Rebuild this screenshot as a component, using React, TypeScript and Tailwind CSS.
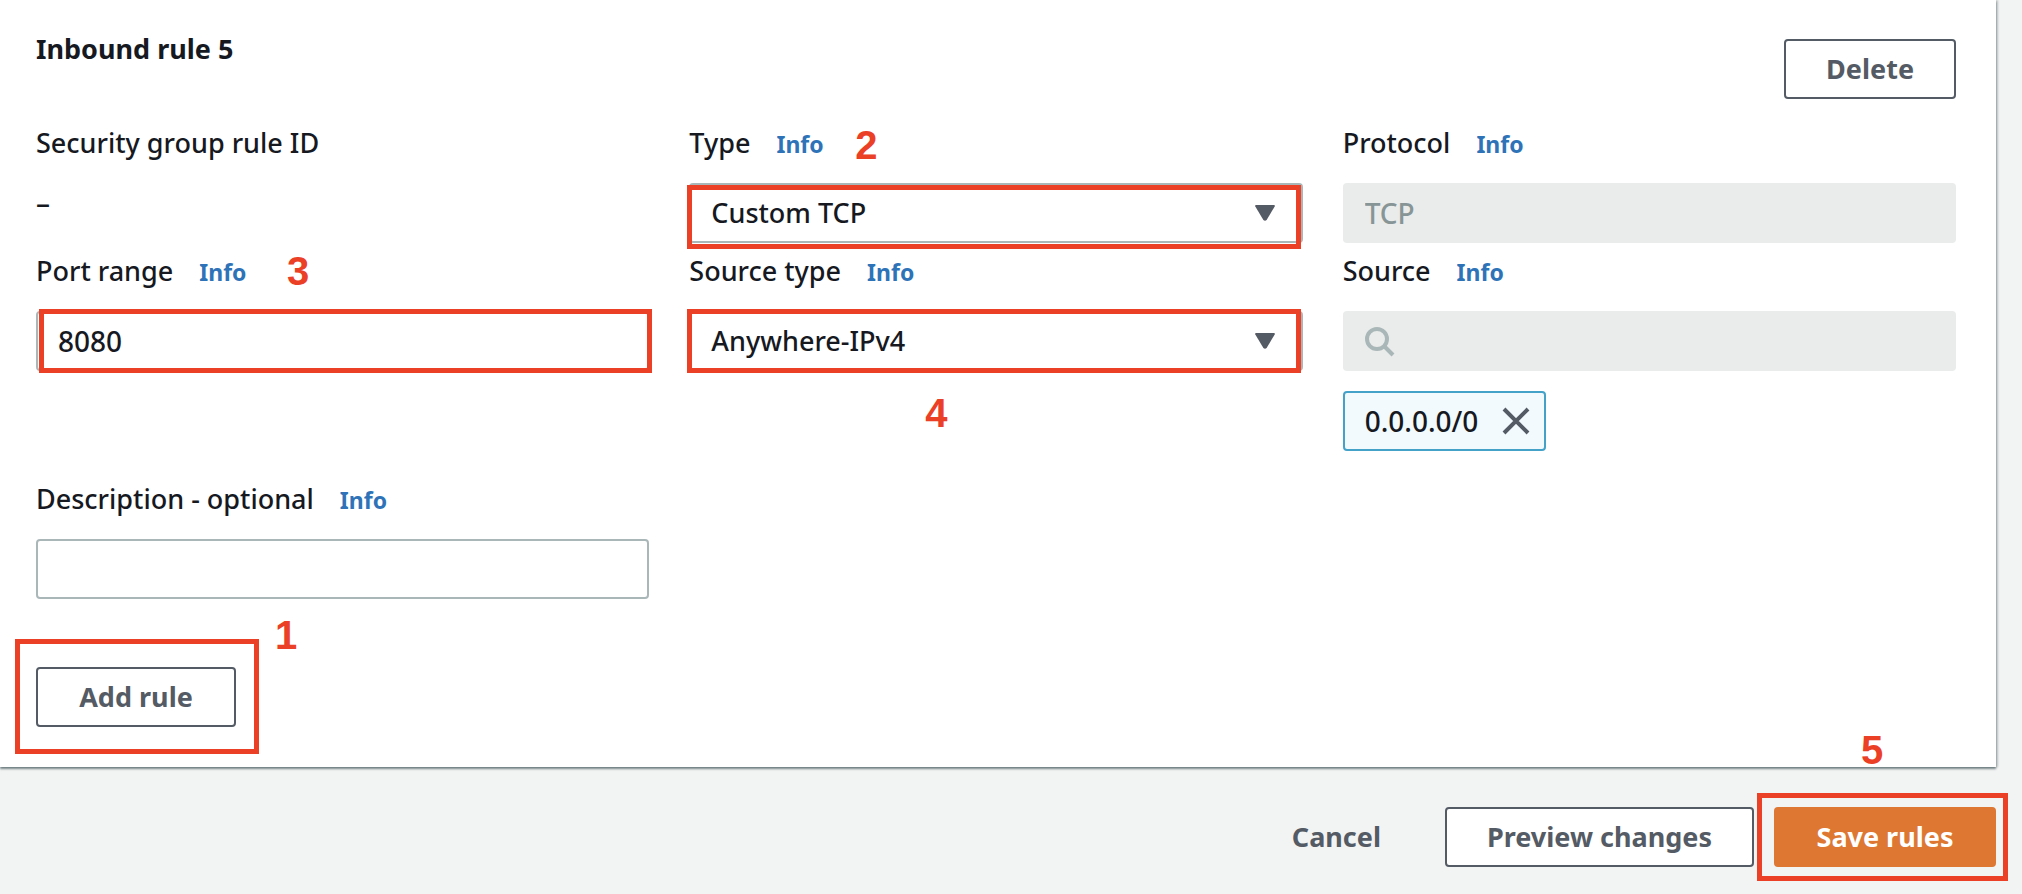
import type { ReactNode } from "react";

const fieldBox =
  "block h-[60px] w-full rounded-[4px] border-2 border-[#aab7b8] bg-white text-[#16191f] outline-none";
const disabledBox =
  "block h-[60px] w-full rounded-[4px] bg-[#eaeceb] text-[28px] text-[#879596] outline-none";
const buttonBase =
  "h-[60px] rounded-[4px] text-[27px] font-bold whitespace-nowrap";
const outlineButton =
  "h-[60px] rounded-[4px] border-2 border-[#545b64] bg-white px-10 text-[27px] font-bold whitespace-nowrap text-[#545b64]";

function Marker({ n, className }: { n: number; className: string }) {
  return (
    <span
      className={`pointer-events-none absolute font-['Liberation_Sans',sans-serif] text-[40px] leading-10 font-bold text-[#eb4026] ${className}`}
    >
      {n}
    </span>
  );
}

function Highlight({ className }: { className: string }) {
  return (
    <span
      aria-hidden="true"
      className={`pointer-events-none absolute border-5 border-[#eb4026] ${className}`}
    />
  );
}

function Field({
  id,
  label,
  info = true,
  marker,
  children,
}: {
  id?: string;
  label: string;
  info?: boolean;
  marker?: ReactNode;
  children: ReactNode;
}) {
  return (
    <div className="relative min-w-0 pt-2">
      <div className="mb-5 flex h-10 items-baseline gap-[26px] text-[27px] leading-10">
        {id ? <label htmlFor={id}>{label}</label> : <span>{label}</span>}
        {info && (
          <a href="#info" className="text-[23px] leading-8 font-bold text-[#2e73b8]">
            Info
          </a>
        )}
      </div>
      {marker}
      {children}
    </div>
  );
}

function SelectBox({ id, value, options, highlight }: { id: string; value: string; options: string[]; highlight: string }) {
  return (
    <div className="relative">
      <select id={id} defaultValue={value} className={`${fieldBox} appearance-none px-5 text-[27px]`}>
        {options.map((o) => (
          <option key={o}>{o}</option>
        ))}
      </select>
      <svg
        viewBox="0 0 20 16"
        className="pointer-events-none absolute top-[22px] right-7 h-4 w-5 fill-[#545b64]"
        aria-hidden="true"
      >
        <path d="M1.2 0h17.6q1.6 0 .9 1.5L11.6 15q-1.6 1.6-3.2 0L.3 1.5Q-.4 0 1.2 0Z" />
      </svg>
      <Highlight className={highlight} />
    </div>
  );
}

export default function App() {
  return (
    <div className="min-h-screen bg-[#f2f3f3] font-['Noto_Sans',sans-serif] font-medium text-[#16191f]">
      <main className="mr-[26px] bg-white pr-10 pb-10 pl-9 shadow-[0_2px_2px_0_rgba(0,28,36,0.5),2px_0_2px_0_rgba(0,28,36,0.2)]">
        <div className="flex items-start justify-between pt-[29px] pb-4">
          <h2 className="text-[27px] leading-10 font-bold">Inbound rule 5</h2>
          <button type="button" className={`${outlineButton} mt-[10px]`}>
            Delete
          </button>
        </div>

        <div className="grid grid-cols-3 gap-x-10">
          <Field label="Security group rule ID" info={false}>
            <div className="text-[28px] leading-10">–</div>
          </Field>
          <Field id="type" label="Type" marker={<Marker n={2} className="top-[10px] left-[166px]" />}>
            <SelectBox
              id="type"
              value="Custom TCP"
              options={["Custom TCP", "Custom UDP", "All traffic"]}
              highlight="top-0.5 -left-[2px] h-16 w-full"
            />
          </Field>
          <Field id="protocol" label="Protocol">
            <input id="protocol" disabled defaultValue="TCP" className={`${disabledBox} px-[22px]`} />
          </Field>

          <Field id="port" label="Port range" marker={<Marker n={3} className="top-[8px] left-[251px]" />}>
            <div className="relative">
              <input id="port" defaultValue="8080" className={`${fieldBox} px-5 text-[28px]`} />
              <Highlight className="-top-0.5 left-[3px] h-16 w-full" />
            </div>
          </Field>
          <Field id="source-type" label="Source type" marker={<Marker n={4} className="top-[150px] left-[236px]" />}>
            <SelectBox
              id="source-type"
              value="Anywhere-IPv4"
              options={["Anywhere-IPv4", "Anywhere-IPv6", "My IP", "Custom"]}
              highlight="-top-0.5 -left-[2px] h-16 w-full"
            />
          </Field>
          <Field id="source" label="Source">
            <div className="relative">
              <input id="source" type="search" disabled className={`${disabledBox} pr-5 pl-16`} />
              <svg
                viewBox="0 0 30 30"
                className="pointer-events-none absolute top-[16px] left-[22px] h-[30px] w-[30px] fill-none stroke-[#aab7b8] stroke-4"
                aria-hidden="true"
              >
                <circle cx="12" cy="12" r="10" />
                <path d="M19 19l9 9" />
              </svg>
            </div>
            <div className="mt-5 flex h-[60px] w-fit items-center gap-6 rounded-[4px] border-2 border-[#44a2c8] bg-[#f2fafe] pr-[14px] pl-5 text-[28px]">
              <span>0.0.0.0/0</span>
              <button type="button" aria-label="Remove 0.0.0.0/0">
                <svg viewBox="0 0 28 28" className="block h-7 w-7 fill-none stroke-[#545b64] stroke-4" aria-hidden="true">
                  <path d="M2 2l24 24M26 2L2 26" />
                </svg>
              </button>
            </div>
          </Field>
        </div>

        <div className="mt-5 grid grid-cols-3 gap-x-10">
          <Field id="description" label="Description - optional">
            <input id="description" className={`${fieldBox} px-5 text-[28px]`} />
          </Field>
        </div>

        <div className="relative mt-[68px] w-fit">
          <button type="button" className={`${outlineButton} block min-w-[200px]`}>
            Add rule
          </button>
          <Highlight className="-top-7 -right-[23px] -bottom-[27px] -left-[21px]" />
          <Marker n={1} className="-top-[52px] left-[239px]" />
        </div>
      </main>

      <footer className="flex items-center justify-end gap-5 py-10 pr-[26px]">
        <button type="button" className={`${buttonBase} px-11 text-[#545b64]`}>
          Cancel
        </button>
        <button type="button" className={outlineButton}>
          Preview changes
        </button>
        <div className="relative">
          <button type="button" className={`${buttonBase} block min-w-[222px] bg-[#dd7731] px-10 text-white`}>
            Save rules
          </button>
          <Highlight className="-top-[14px] -right-3 -bottom-[14px] -left-[17px]" />
          <Marker n={5} className="-top-[77px] left-[87px]" />
        </div>
      </footer>
    </div>
  );
}
